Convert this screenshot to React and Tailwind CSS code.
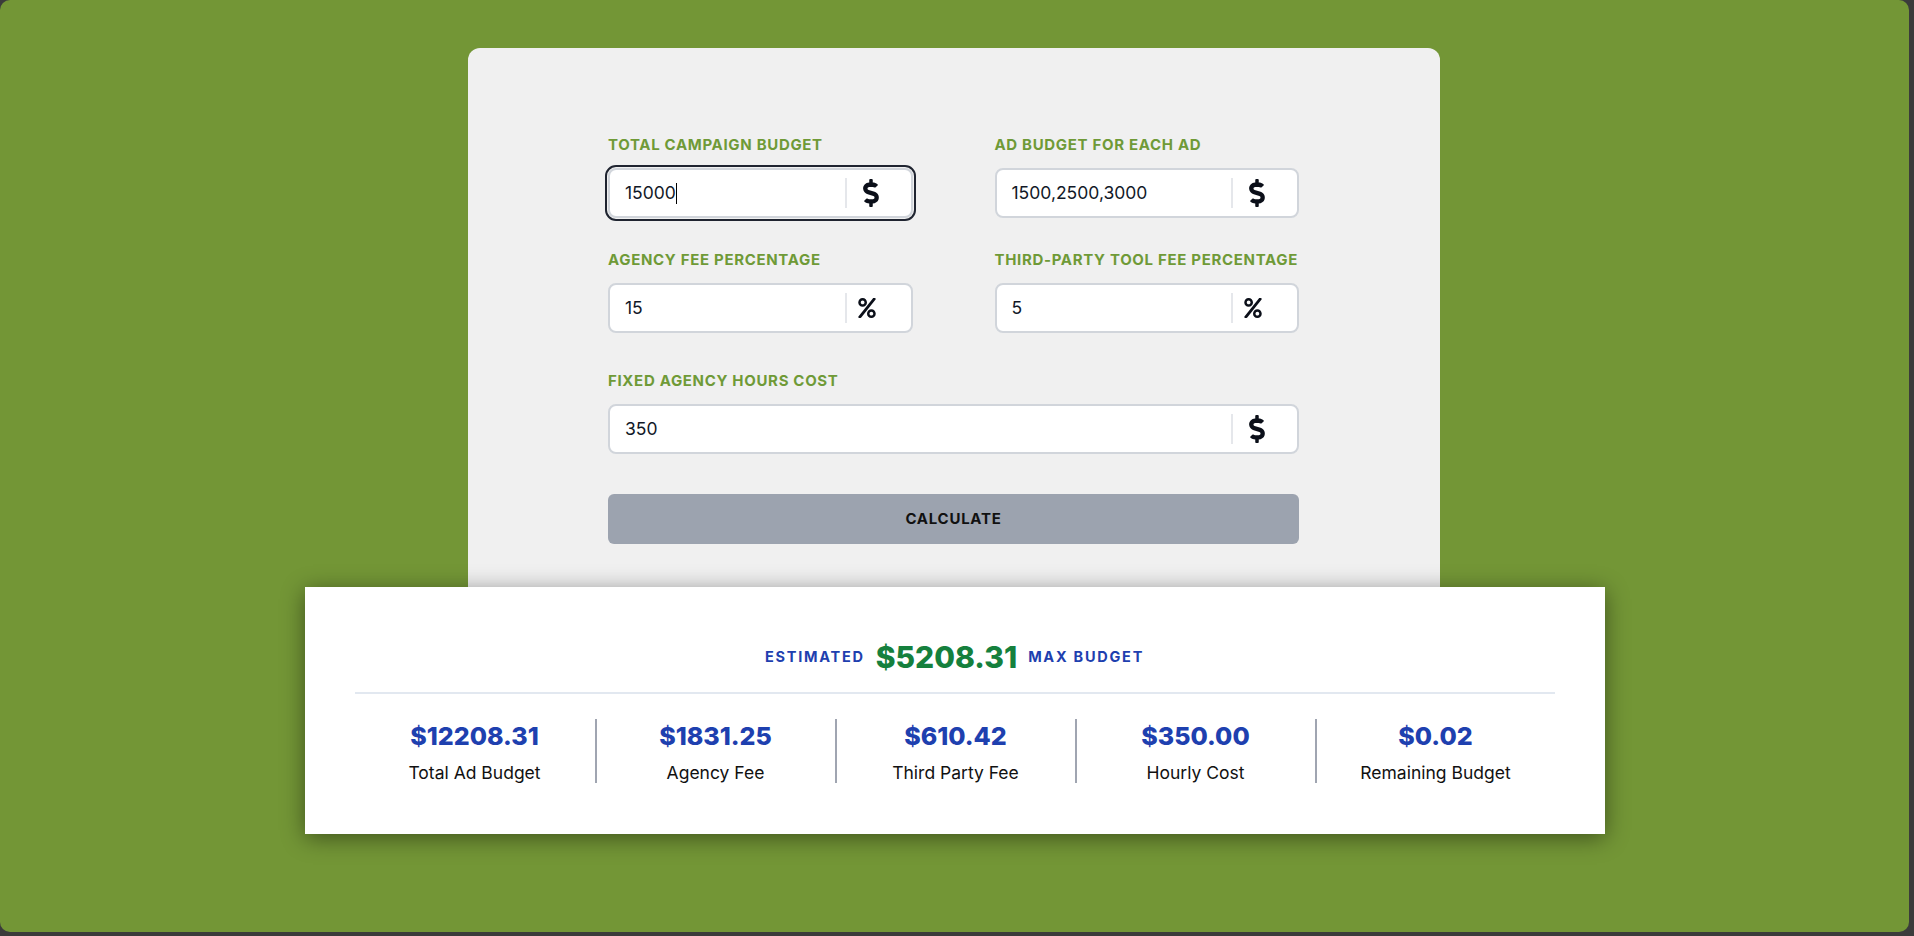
import React from "react";
import { FaDollarSign, FaPercent } from "react-icons/fa";

function Field({ label, value, icon, focused }) {
  return (
    <div>
      <div className="text-[15px] leading-5 font-bold tracking-[0.045em] uppercase whitespace-nowrap text-[#6f9a37] mb-[13px]">
        {label}
      </div>
      <div
        className={
          "flex items-center h-[50px] bg-white border-2 border-[#d1d5db] rounded-[8px] " +
          (focused ? "outline-2 outline-offset-[1px] outline-[#1f2430]" : "")
        }
      >
        <div className="flex-1 flex items-center pl-[15px] text-[17.5px] text-[#111827]">
          <span>{value}</span>
          {focused && <span className="w-px h-[21px] bg-black" />}
        </div>
        <div className="w-[66px] h-[30px] border-l-2 border-[#e5e7eb] flex items-center pl-[10px] text-[#0b0f19]">
          {icon === "dollar" ? <FaDollarSign size={28} /> : <FaPercent size={20} />}
        </div>
      </div>
    </div>
  );
}

function Stat({ value, label, first }) {
  return (
    <div
      className={
        "flex flex-col items-center h-[64px] pt-[1px] " +
        (first ? "" : "border-l-2 border-[#a0a5b1]")
      }
    >
      <div className="text-[25px] leading-8 font-extrabold text-[#1e40af]">{value}</div>
      <div className="text-[17.5px] leading-6 mt-[9px] text-[#111]">{label}</div>
    </div>
  );
}

export default function App() {
  return (
    <div className="w-[1914px] h-[936px] bg-[#3b3b3b] font-['Inter',sans-serif] overflow-hidden">
      <div className="w-[1909px] h-[932px] bg-[#739636] rounded-[10px] flex flex-col items-center pt-[48px]">
        <div className="w-[972px] bg-[#f0f0f0] rounded-t-[12px] pt-[87px] pb-[43px] -translate-x-px">
          <div className="w-[691px] mx-auto">
            <div className="grid grid-cols-2 gap-x-[82px] gap-y-[32px]">
              <Field label="Total Campaign Budget" value="15000" icon="dollar" focused />
              <Field label="Ad Budget for each Ad" value="1500,2500,3000" icon="dollar" />
              <Field label="Agency Fee Percentage" value="15" icon="percent" />
              <Field label="Third-Party Tool Fee Percentage" value="5" icon="percent" />
            </div>
            <div className="mt-[38px]">
              <Field label="Fixed Agency Hours Cost" value="350" icon="dollar" />
            </div>
            <button className="mt-[40px] w-full h-[50px] rounded-[6px] bg-[#9ca3af] text-[15px] font-bold tracking-[0.05em] text-[#111]">
              CALCULATE
            </button>
          </div>
        </div>
        <div className="w-[1300px] bg-white px-[50px] pt-[50px] pb-[51px] shadow-[0_4px_22px_rgba(0,0,0,0.45)] relative">
          <div className="flex items-center justify-center gap-[11px] h-[40px]">
            <span className="text-[14.5px] font-bold tracking-[0.12em] text-[#1e40af]">ESTIMATED</span>
            <span className="text-[30px] font-extrabold text-[#15803d] leading-10">$5208.31</span>
            <span className="text-[14.5px] font-bold tracking-[0.12em] text-[#1e40af]">MAX BUDGET</span>
          </div>
          <div className="h-[2px] bg-[#e2e8f0] mt-[15px]" />
          <div className="grid grid-cols-5 mt-[25px]">
            <Stat value="$12208.31" label="Total Ad Budget" first />
            <Stat value="$1831.25" label="Agency Fee" />
            <Stat value="$610.42" label="Third Party Fee" />
            <Stat value="$350.00" label="Hourly Cost" />
            <Stat value="$0.02" label="Remaining Budget" />
          </div>
        </div>
      </div>
    </div>
  );
}
